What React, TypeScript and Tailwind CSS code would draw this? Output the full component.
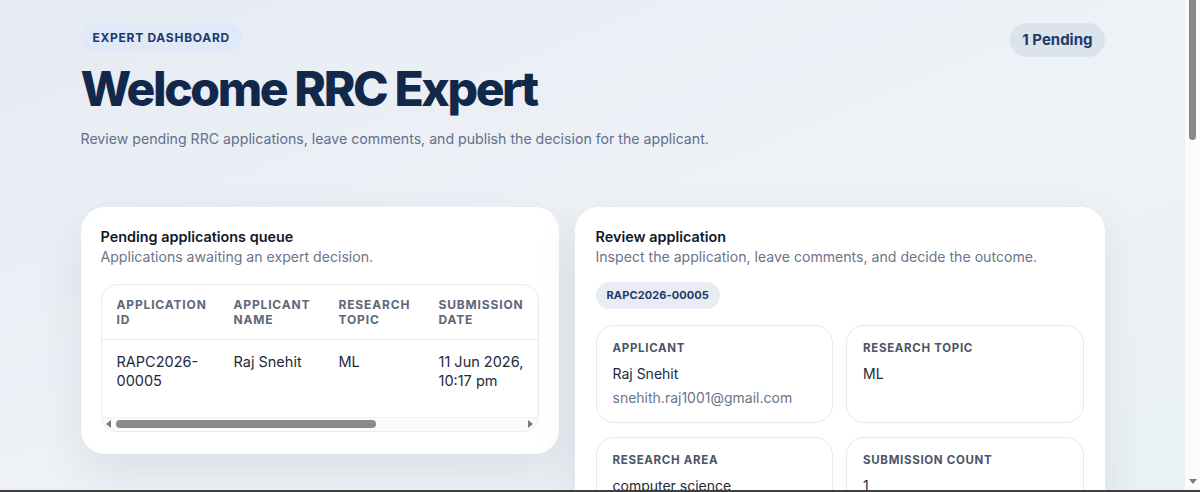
import React from "react";

const font = { fontFamily: "Inter, 'Noto Sans', sans-serif" };

function InfoBox({ label, value, sub }: { label: string; value: string; sub?: string }) {
  return (
    <div className="rounded-[18px] border border-[#e6eaf0] bg-white px-4 pt-[14px] pb-[13px] min-h-[96px]">
      <div className="text-[11.5px] leading-4 font-bold tracking-[0.06em] text-[#4b5567] uppercase">{label}</div>
      <div className="mt-[7px] text-[14px] leading-[22px] text-[#1e293b]">{value}</div>
      {sub && <div className="mt-[2px] text-[14px] leading-[22px] text-[#6b7589]">{sub}</div>}
    </div>
  );
}

function Arrow({ dir }: { dir: "left" | "right" | "down" }) {
  const pts = dir === "left" ? "6,0 6,8 1,4" : dir === "right" ? "1,0 1,8 6,4" : "0,1 8,1 4,6";
  return (
    <svg width="8" height="8" viewBox="0 0 8 8" className="shrink-0">
      <polygon points={pts} fill="#7b7b7b" />
    </svg>
  );
}

export default function App() {
  return (
    <div style={font} className="flex h-[492px] flex-col overflow-hidden">
      <div className="flex min-h-0 flex-1">
        <div className="min-w-0 flex-1 overflow-hidden bg-gradient-to-br from-[#e6ebf3] via-[#eef2f7] to-[#eaf1f5]">
          <div className="mx-auto max-w-[1024px] pt-[23px] pb-16">
            <div className="flex items-start justify-between">
              <span className="inline-flex h-[29px] items-center rounded-full bg-[#dfe9f8] px-3 text-[12px] font-bold tracking-[0.06em] text-[#1e3a6c]">
                EXPERT DASHBOARD
              </span>
              <span className="inline-flex h-[34px] items-center rounded-full bg-[#dbe3ec] px-3 text-[15px] font-bold text-[#1e3a6b]">
                1 Pending
              </span>
            </div>
            <h1 className="mt-[8px] text-[48px] leading-[48px] font-extrabold tracking-[-0.05em] text-[#12284a]">
              Welcome RRC Expert
            </h1>
            <p className="mt-[15px] text-[14.15px] leading-[22px] text-[#64708a]">
              Review pending RRC applications, leave comments, and publish the decision for the applicant.
            </p>

            <div className="mt-[57px] grid grid-cols-[478px_1fr] items-start gap-4">
              {/* Left card */}
              <div className="rounded-[24px] bg-white px-5 pt-5 pb-[22px] shadow-[0_18px_45px_rgba(30,41,59,0.09)]">
                <div className="text-[14.4px] leading-5 font-semibold text-[#111827]">Pending applications queue</div>
                <div className="text-[14.1px] leading-5 text-[#6b7589]">Applications awaiting an expert decision.</div>
                <div className="mt-[17px] overflow-hidden rounded-[16px] border border-[#e8ebf0]">
                  <div className="overflow-hidden">
                    <table className="table-fixed border-collapse w-[690px]">
                      <colgroup>
                        <col className="w-[117px]" />
                        <col className="w-[105px]" />
                        <col className="w-[100px]" />
                        <col className="w-[130px]" />
                        <col className="w-[118px]" />
                        <col className="w-[120px]" />
                      </colgroup>
                      <thead>
                        <tr className="border-b border-[#e8ebf0] text-left">
                          {["Application ID", "Applicant Name", "Research Topic", "Submission Date", "Status", "Action"].map((h) => (
                            <th key={h} className="px-[15px] pt-[12px] pb-[12px] align-top text-[12px] leading-[15px] font-bold tracking-[0.07em] text-[#5d6779] uppercase">
                              {h}
                            </th>
                          ))}
                        </tr>
                      </thead>
                      <tbody>
                        <tr className="h-[77px] text-[14.5px] leading-[19px] text-[#1e293b]">
                          <td className="px-[15px] pt-[12px] align-top">RAPC2026-00005</td>
                          <td className="px-[15px] pt-[12px] align-top">Raj Snehit</td>
                          <td className="px-[15px] pt-[12px] align-top">ML</td>
                          <td className="px-[15px] pt-[12px] align-top">11 Jun 2026, 10:17 pm</td>
                          <td className="px-[15px] pt-[12px] align-top">Pending</td>
                          <td className="px-[15px] pt-[12px] align-top">Review</td>
                        </tr>
                      </tbody>
                    </table>
                  </div>
                  {/* horizontal scrollbar */}
                  <div className="flex h-[14px] items-center gap-[3px] border-t border-[#eef0f3] bg-[#fafbfc] px-[3px]">
                    <Arrow dir="left" />
                    <div className="flex h-full flex-1 items-center">
                      <div className="h-[8px] w-[260px] rounded-full bg-[#8a8a8a]" />
                    </div>
                    <Arrow dir="right" />
                  </div>
                </div>
              </div>

              {/* Right card */}
              <div className="rounded-[24px] bg-white px-[21px] pt-5 pb-6 shadow-[0_18px_45px_rgba(30,41,59,0.09)]">
                <div className="text-[14.4px] leading-5 font-semibold text-[#111827]">Review application</div>
                <div className="text-[14.1px] leading-5 text-[#6b7589]">Inspect the application, leave comments, and decide the outcome.</div>
                <span className="mt-[15px] inline-flex h-[27px] items-center rounded-full bg-[#e8edf3] px-[11px] text-[11px] font-bold tracking-[0.01em] text-[#1e3a6b]">
                  RAPC2026-00005
                </span>
                <div className="mt-4 grid grid-cols-2 gap-x-[13px] gap-y-[14px]">
                  <InfoBox label="Applicant" value="Raj Snehit" sub="snehith.raj1001@gmail.com" />
                  <InfoBox label="Research Topic" value="ML" />
                  <InfoBox label="Research Area" value="computer science" />
                  <InfoBox label="Submission Count" value="1" />
                  <InfoBox label="Submitted On" value="11 Jun 2026, 10:17 pm" />
                  <InfoBox label="Status" value="Pending" />
                </div>
                <div className="mt-4 rounded-[18px] border border-[#e6eaf0] p-4">
                  <div className="text-[11.5px] font-bold tracking-[0.06em] text-[#4b5567] uppercase">Abstract</div>
                  <p className="mt-2 text-[14px] leading-[22px] text-[#1e293b]">
                    Machine learning research proposal submitted for RRC review.
                  </p>
                </div>
                <div className="mt-4">
                  <div className="text-[13px] font-semibold text-[#334155]">Comments</div>
                  <div className="mt-2 h-[120px] rounded-[14px] border border-[#dfe4eb]" />
                </div>
                <div className="mt-6 flex gap-3">
                  <div className="h-11 rounded-full bg-[#12284a] px-6 text-[14px] font-semibold leading-[44px] text-white">Approve</div>
                  <div className="h-11 rounded-full bg-[#e8edf3] px-6 text-[14px] font-semibold leading-[44px] text-[#1e3a6b]">Reject</div>
                </div>
              </div>
            </div>
          </div>
        </div>
        {/* vertical page scrollbar */}
        <div className="flex w-[15px] shrink-0 flex-col items-center bg-[#fbfbfb] pb-[4px]">
          <div className="mt-0 h-[140px] w-[7px] rounded-b-full bg-[#8a8a8a]" />
          <div className="flex-1" />
          <Arrow dir="down" />
        </div>
      </div>
      <div className="h-[2px] shrink-0 bg-[#3f3f3f]" />
    </div>
  );
}
